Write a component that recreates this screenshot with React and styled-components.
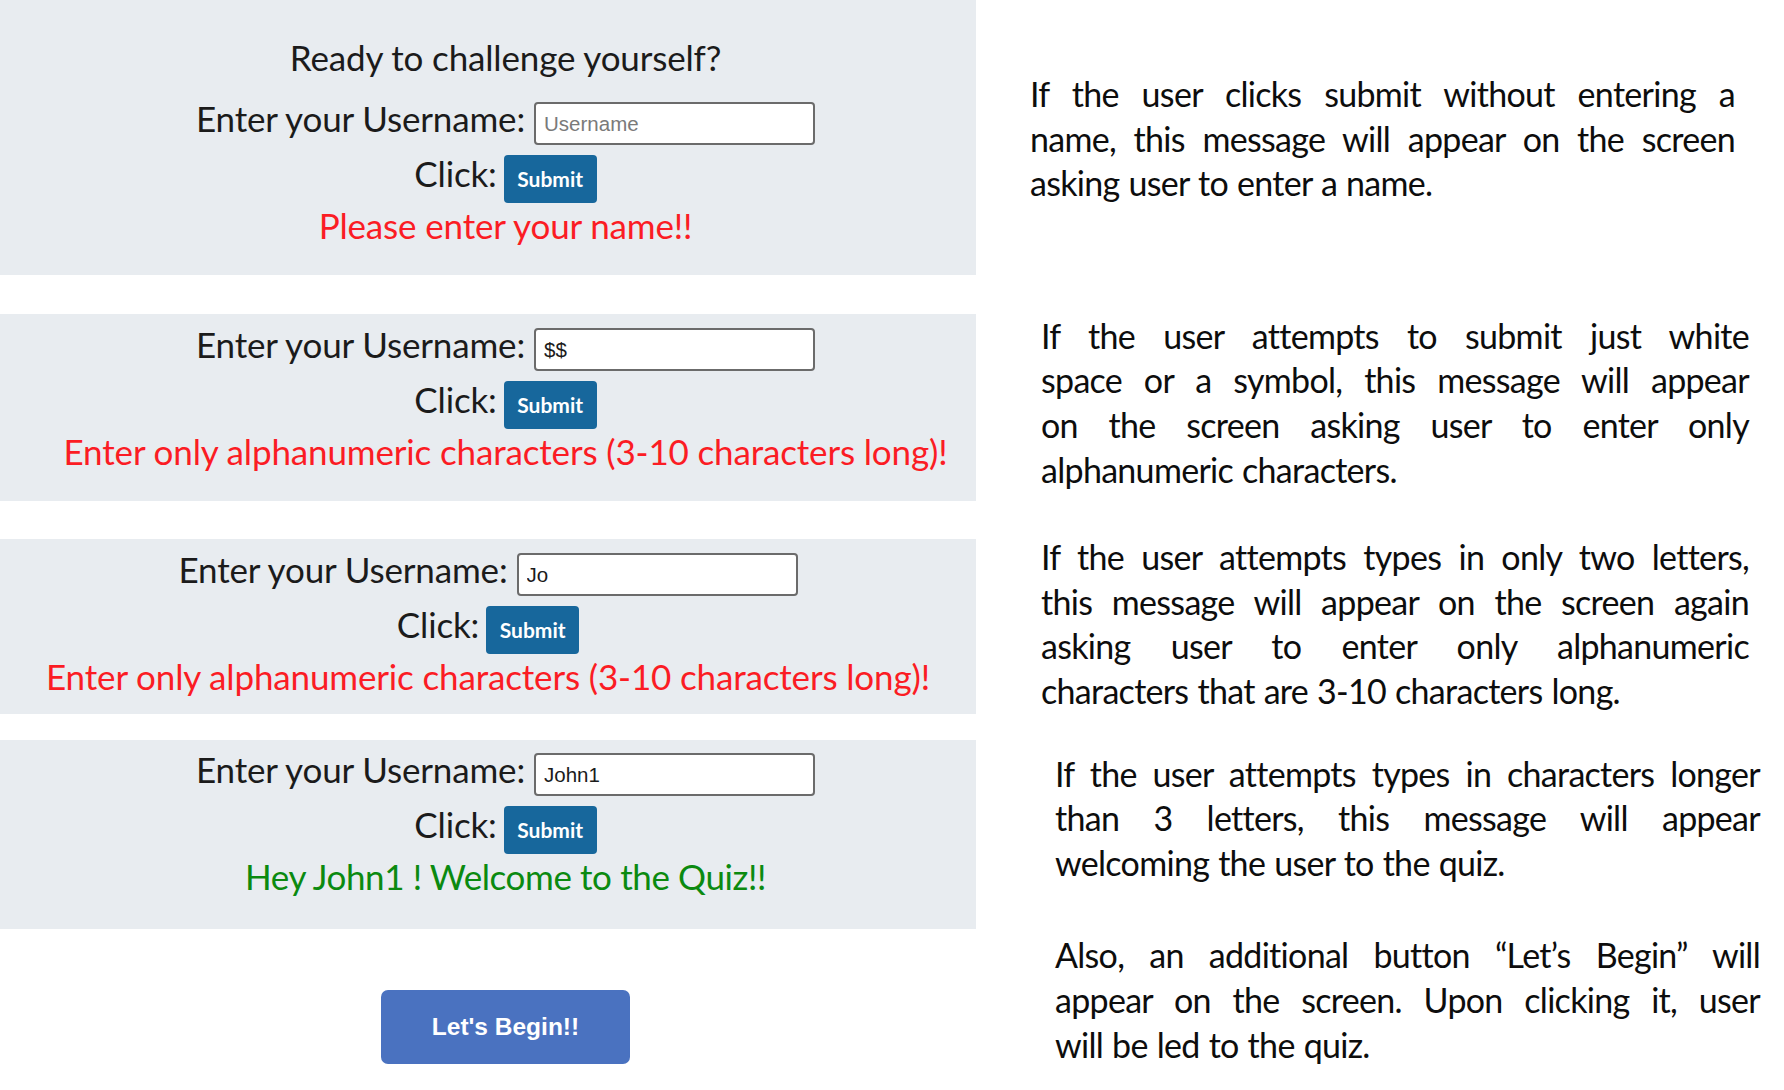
import React from 'react';
import styled, { createGlobalStyle } from 'styled-components';

const GlobalStyle = createGlobalStyle`
  html, body {
    margin: 0;
    padding: 0;
    background: #ffffff;
  }
  body {
    font-family: 'Lato', 'Liberation Sans', sans-serif;
    color: #1b1b1b;
  }
`;

const Page = styled.div`
  display: flex;
  width: 1784px;
  height: 1090px;
  overflow: hidden;
`;

const Demo = styled.div`
  width: 976px;
  flex-shrink: 0;
  display: flex;
  flex-direction: column;
`;

const Panel = styled.section`
  background: #e8ecf0;
  margin-top: ${(p) => p.$gap || 0}px;
  padding: ${(p) => p.$padTop}px 0 ${(p) => p.$padBottom}px ${(p) => p.$indent}px;
  display: flex;
  flex-direction: column;
  align-items: center;
`;

const Title = styled.h2`
  margin: 0;
  height: 63px;
  line-height: 60px;
  font-size: 35px;
  font-weight: 400;
  letter-spacing: -0.15px;
`;

const Row = styled.div`
  display: flex;
  align-items: center;
  justify-content: center;
  gap: 9px;
  height: ${(p) => p.$h}px;
`;

const Label = styled.label`
  font-size: 35px;
  letter-spacing: -0.15px;
`;

const Input = styled.input`
  box-sizing: border-box;
  width: 281px;
  height: 43px;
  margin-top: 11px;
  border: 2px solid #6b6b6b;
  border-radius: 4px;
  background: #ffffff;
  padding: 0 8px;
  font-family: 'Liberation Sans', Arial, sans-serif;
  font-size: 20.5px;
  color: #1b1b1b;
  outline: none;
  &::placeholder {
    color: #7a7a7a;
  }
`;

const SubmitButton = styled.button`
  box-sizing: border-box;
  width: 93px;
  height: 48px;
  margin-top: 11px;
  margin-left: -2px;
  border: none;
  border-radius: 4px;
  background: #17679c;
  color: #ffffff;
  font-family: 'Lato', sans-serif;
  font-weight: 700;
  font-size: 21px;
  padding: 0;
`;

const Message = styled.p`
  margin: 0;
  height: 50px;
  line-height: 50px;
  font-size: 35px;
  letter-spacing: ${(p) => (p.$ok ? '-0.4px' : '-0.15px')};
  white-space: nowrap;
  color: ${(p) => (p.$ok ? '#0b8a10' : '#fb1c24')};
`;

const BeginWrap = styled.div`
  margin-top: 61px;
  padding-left: 35px;
  display: flex;
  justify-content: center;
`;

const BeginButton = styled.button`
  width: 249px;
  height: 74px;
  border: none;
  border-radius: 7px;
  background: #4a72c0;
  color: #ffffff;
  font-family: 'Liberation Sans', Arial, sans-serif;
  font-weight: 700;
  font-size: 24.5px;
`;

const Notes = styled.div`
  flex: 1;
  display: flex;
  flex-direction: column;
  padding-top: 72px;
`;

const Note = styled.div`
  margin-top: ${(p) => p.$gap || 0}px;
  margin-left: ${(p) => p.$left}px;
  width: ${(p) => p.$width}px;
  font-family: 'Lato', 'Liberation Sans', sans-serif;
  font-size: 34px;
  letter-spacing: -0.7px;
  line-height: 44.6px;
  color: #0d0d0d;
`;

const Line = styled.div`
  white-space: normal;
  text-align: ${(p) => (p.$last ? 'left' : 'justify')};
  text-align-last: ${(p) => (p.$last ? 'left' : 'justify')};
  word-spacing: ${(p) => (p.$last ? '1px' : '0')};
`;

const scenarios = [
  {
    title: 'Ready to challenge yourself?',
    value: '',
    message: 'Please enter your name!!',
    padTop: 27,
    padBottom: 25,
    indent: 35,
    gap: 0,
  },
  {
    value: '$$',
    message: 'Enter only alphanumeric characters (3-10 characters long)!',
    padTop: 2,
    padBottom: 25,
    indent: 35,
    gap: 39,
  },
  {
    value: 'Jo',
    message: 'Enter only alphanumeric characters (3-10 characters long)!',
    padTop: 2,
    padBottom: 13,
    indent: 0,
    gap: 38,
  },
  {
    value: 'John1',
    message: 'Hey John1 ! Welcome to the Quiz!!',
    ok: true,
    padTop: 1,
    padBottom: 28,
    indent: 35,
    gap: 26,
  },
];

const notes = [
  {
    left: 54,
    width: 705,
    gap: 0,
    lines: [
      'If the user clicks submit without entering a',
      'name, this message will appear on the screen',
      'asking user to enter a name.',
    ],
  },
  {
    left: 65,
    width: 708,
    gap: 108,
    lines: [
      'If the user attempts to submit just white',
      'space or a symbol, this message will appear',
      'on the screen asking user to enter only',
      'alphanumeric characters.',
    ],
  },
  {
    left: 65,
    width: 708,
    gap: 43,
    lines: [
      'If the user attempts types in only two letters,',
      'this message will appear on the screen again',
      'asking user to enter only alphanumeric',
      'characters that are 3-10 characters long.',
    ],
  },
  {
    left: 79,
    width: 705,
    gap: 38,
    lines: [
      'If the user attempts types in characters longer',
      'than 3 letters, this message will appear',
      'welcoming the user to the quiz.',
    ],
  },
  {
    left: 79,
    width: 705,
    gap: 48,
    lines: [
      'Also, an additional button \u201CLet\u2019s Begin\u201D will',
      'appear on the screen. Upon clicking it, user',
      'will be led to the quiz.',
    ],
  },
];

const App = () => {
  return (
    <Page>
      <GlobalStyle />
      <Demo>
        {scenarios.map((s, i) => (
          <Panel
            key={i}
            $gap={s.gap}
            $padTop={s.padTop}
            $padBottom={s.padBottom}
            $indent={s.indent}
          >
            {s.title && <Title>{s.title}</Title>}
            <Row $h={56}>
              <Label>Enter your Username:</Label>
              <Input placeholder="Username" defaultValue={s.value} />
            </Row>
            <Row $h={54}>
              <Label>Click:</Label>
              <SubmitButton>Submit</SubmitButton>
            </Row>
            <Message $ok={s.ok}>{s.message}</Message>
          </Panel>
        ))}
        <BeginWrap>
          <BeginButton>Let's Begin!!</BeginButton>
        </BeginWrap>
      </Demo>
      <Notes>
        {notes.map((n, i) => (
          <Note key={i} $left={n.left} $width={n.width} $gap={n.gap}>
            {n.lines.map((line, j) => (
              <Line key={j} $last={j === n.lines.length - 1}>
                {line}
              </Line>
            ))}
          </Note>
        ))}
      </Notes>
    </Page>
  );
};

export default App;
